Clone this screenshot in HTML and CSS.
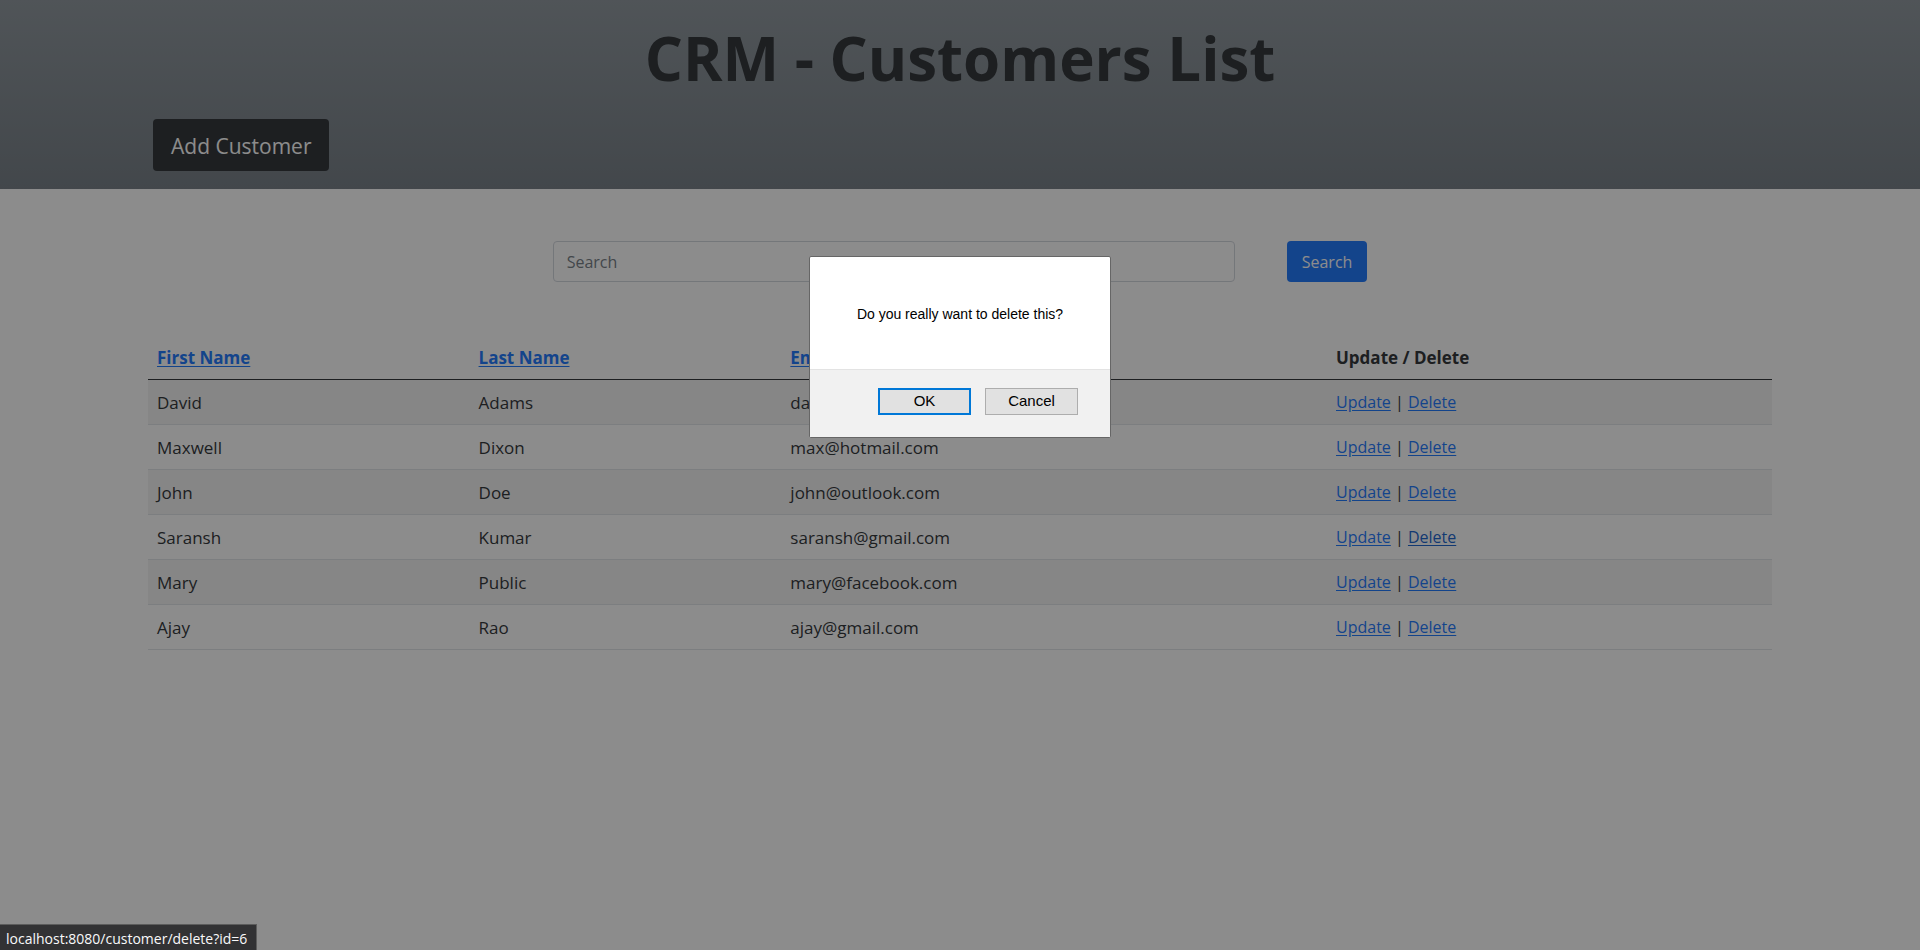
FILE: index.html
```html
<!DOCTYPE html>
<html lang="en">
<head>
<meta charset="utf-8">
<title>CRM - Customers List</title>
<link rel="stylesheet" href="styles.css">
</head>
<body>
<header class="hero">
  <h1 class="hero-title">CRM - Customers List</h1>
  <button type="button" class="btn btn-dark">Add Customer</button>
</header>
<main class="content">
  <form class="search">
    <input class="search-input" type="search" placeholder="Search" aria-label="Search">
    <button type="submit" class="btn btn-primary">Search</button>
  </form>
  <table class="customers">
    <thead>
      <tr>
        <th class="col-first"><a href="#first">First Name</a></th>
        <th class="col-last"><a href="#last">Last Name</a></th>
        <th class="col-email"><a href="#email">Email</a></th>
        <th class="col-actions">Update / Delete</th>
      </tr>
    </thead>
    <tbody>
      <tr><td>David</td><td>Adams</td><td>david@gmail.com</td><td class="actions"><a href="#u1">Update</a> | <a href="#d1">Delete</a></td></tr>
      <tr><td>Maxwell</td><td>Dixon</td><td>max@hotmail.com</td><td class="actions"><a href="#u2">Update</a> | <a href="#d2">Delete</a></td></tr>
      <tr><td>John</td><td>Doe</td><td>john@outlook.com</td><td class="actions"><a href="#u3">Update</a> | <a href="#d3">Delete</a></td></tr>
      <tr><td>Saransh</td><td>Kumar</td><td>saransh@gmail.com</td><td class="actions"><a href="#u4">Update</a> | <a class="active" href="#d4">Delete</a></td></tr>
      <tr><td>Mary</td><td>Public</td><td>mary@facebook.com</td><td class="actions"><a href="#u5">Update</a> | <a href="#d5">Delete</a></td></tr>
      <tr><td>Ajay</td><td>Rao</td><td>ajay@gmail.com</td><td class="actions"><a href="#u6">Update</a> | <a href="#d6">Delete</a></td></tr>
    </tbody>
  </table>
</main>
<div class="overlay">
  <div class="dialog" role="alertdialog" aria-modal="true" aria-labelledby="dialog-text">
    <p class="dialog-text" id="dialog-text">Do you really want to delete this?</p>
    <div class="dialog-actions">
      <button type="button" class="dialog-btn dialog-btn-default">OK</button>
      <button type="button" class="dialog-btn">Cancel</button>
    </div>
  </div>
</div>
<div class="status">localhost:8080/customer/delete?id=6</div>
</body>
</html>
```
FILE: styles.css
```css
* { box-sizing: border-box; }

body {
  margin: 0;
  background: #fff;
  color: #212529;
  font-family: "Open Sans", "Noto Sans", sans-serif;
  font-size: 17px;
  line-height: 27px;
}

a { color: #0d6efd; text-underline-offset: 2px; }
a.active { color: #0a58ca; }

.hero {
  padding: 20px 153px 18px;
  background: linear-gradient(#868f96, #6c757d);
}

.hero-title {
  margin: 0 0 23px;
  font-size: 60px;
  line-height: 76px;
  font-weight: 700;
  text-align: center;
}

.btn {
  border: 0;
  border-radius: 4px;
  color: #fff;
  font-family: inherit;
  cursor: pointer;
}

.btn-dark {
  padding: 11px 18px 9px;
  background: #212529;
  font-size: 21px;
  line-height: 32px;
}

.btn-primary {
  padding: 8px 15px 6px;
  background: #0d6efd;
  font-size: 16px;
  line-height: 27px;
}

.content { padding: 52px 148px; }

.search {
  display: flex;
  justify-content: center;
  gap: 52px;
  margin-bottom: 53px;
}

.search-input {
  width: 42%;
  padding: 7px 13px 5px;
  border: 1px solid #ced4da;
  border-radius: 4px;
  background: #fff;
  font-family: inherit;
  font-size: 16px;
  line-height: 27px;
}

.search-input::placeholder { color: #6c757d; opacity: 1; }

.customers {
  width: 100%;
  table-layout: fixed;
  border-collapse: collapse;
  text-align: left;
}

.customers th,
.customers td {
  padding: 9px 9px 8px;
  border-bottom: 1px solid #dee2e6;
}

.customers thead th { border-bottom-color: #212529; }
.customers tbody tr:nth-child(odd) { background: #f2f2f2; }
.customers .actions { font-size: 16px; }

.col-first { width: 19.8%; }
.col-last { width: 19.2%; }
.col-email { width: 33.6%; }
.col-actions { width: 27.4%; }

.overlay {
  position: fixed;
  inset: 0;
  display: flex;
  justify-content: center;
  align-items: flex-start;
  padding-top: 256px;
  background: rgba(26, 26, 26, 0.5);
}

.dialog {
  width: 302px;
  border: 1px solid #666;
  border-radius: 2px;
  background: #fff;
  color: #000;
  font-family: "Liberation Sans", Arial, sans-serif;
}

.dialog-text {
  margin: 0;
  padding: 47px 24px 45px;
  font-size: 14px;
  line-height: 20px;
  text-align: center;
}

.dialog-actions {
  display: flex;
  justify-content: flex-end;
  gap: 14px;
  padding: 18px 32px 22px;
  border-top: 1px solid #e3e3e3;
  background: #f1f1f1;
}

.dialog-btn {
  height: 27px;
  width: 93px;
  padding: 0 0 2px;
  border: 1px solid #adadad;
  background: #e1e1e1;
  color: #000;
  font-family: inherit;
  font-size: 15px;
}

.dialog-btn-default { border: 2px solid #0078d7; }

.status {
  position: fixed;
  left: 0;
  bottom: 0;
  padding: 3px 9px 0 6px;
  border-top: 1px solid #5c5c5c;
  border-right: 1px solid #5c5c5c;
  background: #323234;
  color: #f9f9fa;
  font-size: 14px;
  line-height: 22px;
}
```
